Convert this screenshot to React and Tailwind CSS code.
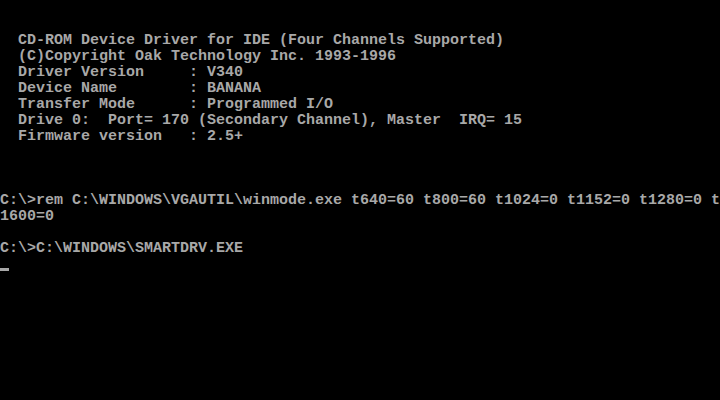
import React from "react";

const lines = [
  "",
  "",
  "  CD-ROM Device Driver for IDE (Four Channels Supported)",
  "  (C)Copyright Oak Technology Inc. 1993-1996",
  "  Driver Version     : V340",
  "  Device Name        : BANANA",
  "  Transfer Mode      : Programmed I/O",
  "  Drive 0:  Port= 170 (Secondary Channel), Master  IRQ= 15",
  "  Firmware version   : 2.5+",
  "",
  "",
  "",
  "C:\\>rem C:\\WINDOWS\\VGAUTIL\\winmode.exe t640=60 t800=60 t1024=0 t1152=0 t1280=0 t",
  "1600=0",
  "",
  "C:\\>C:\\WINDOWS\\SMARTDRV.EXE",
];

const App = () => {
  return (
    <div className="w-[720px] h-[400px] bg-black overflow-hidden text-[#a8a8a8] text-[15px] leading-4 font-bold font-['Liberation_Mono',monospace]">
      {lines.map((line, i) => (
        <div key={i} className="h-4 pt-px whitespace-pre">
          {line}
        </div>
      ))}
      {/* blinking cursor row */}
      <div className="h-4">
        <div className="mt-[12px] h-[3px] w-[9px] bg-[#a8a8a8]"></div>
      </div>
    </div>
  );
};

export default App;
